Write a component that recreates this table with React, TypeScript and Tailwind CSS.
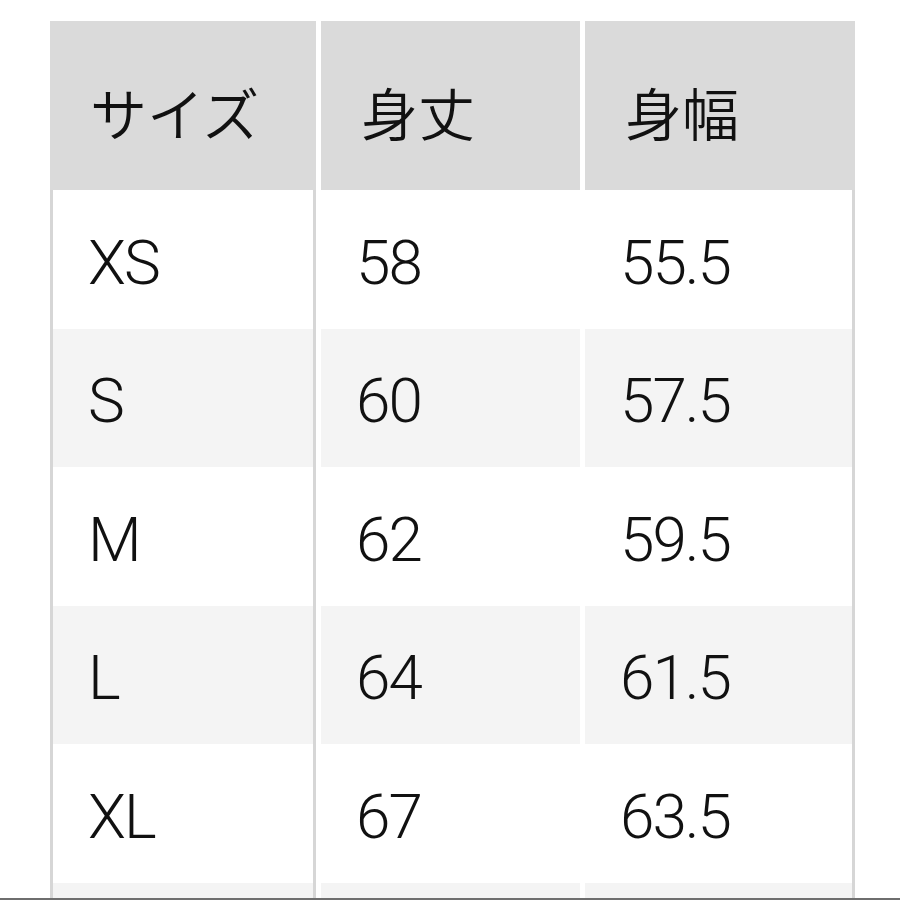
import React from "react";

const rows = [
  { size: "XS", length: "58", width: "55.5" },
  { size: "S", length: "60", width: "57.5" },
  { size: "M", length: "62", width: "59.5" },
  { size: "L", length: "64", width: "61.5" },
  { size: "XL", length: "67", width: "63.5" },
  { size: "", length: "", width: "" },
];

const headCell =
  "h-[169px] bg-[#dadada] flex items-center pl-[40px] pt-[11px] text-[57px] font-[350] leading-none text-[#111] font-['Noto_Sans_CJK_JP',sans-serif]";

const App: React.FC = () => {
  return (
    <div className="min-h-[900px] bg-white pl-[50px] pt-[21px]">
      <div className="grid grid-cols-[266px_259px_270px] gap-x-[5px]">
        <div className={headCell}>サイズ</div>
        <div className={headCell}>身丈</div>
        <div className={headCell}>身幅</div>

        {rows.map((row, i) => {
          const bg = i % 2 === 0 ? "bg-white" : "bg-[#f4f4f4]";
          const body = `h-[138.5px] ${bg} flex items-center pl-[35px] pt-[7px] text-[62px] font-light leading-none tracking-[-2px] text-[#111] font-['Roboto',Arial,sans-serif]`;
          return (
            <React.Fragment key={i}>
              <div className={`${body} border-x-[3px] border-[#d6d6d6] pl-[33px]`}>{row.size}</div>
              <div className={body}>{row.length}</div>
              <div className={`${body} border-r-[3px] border-[#d6d6d6]`}>{row.width}</div>
            </React.Fragment>
          );
        })}
      </div>
      <div className="fixed bottom-0 left-0 right-0 h-[2px] bg-[#6e6e6e]" />
    </div>
  );
};

export default App;
